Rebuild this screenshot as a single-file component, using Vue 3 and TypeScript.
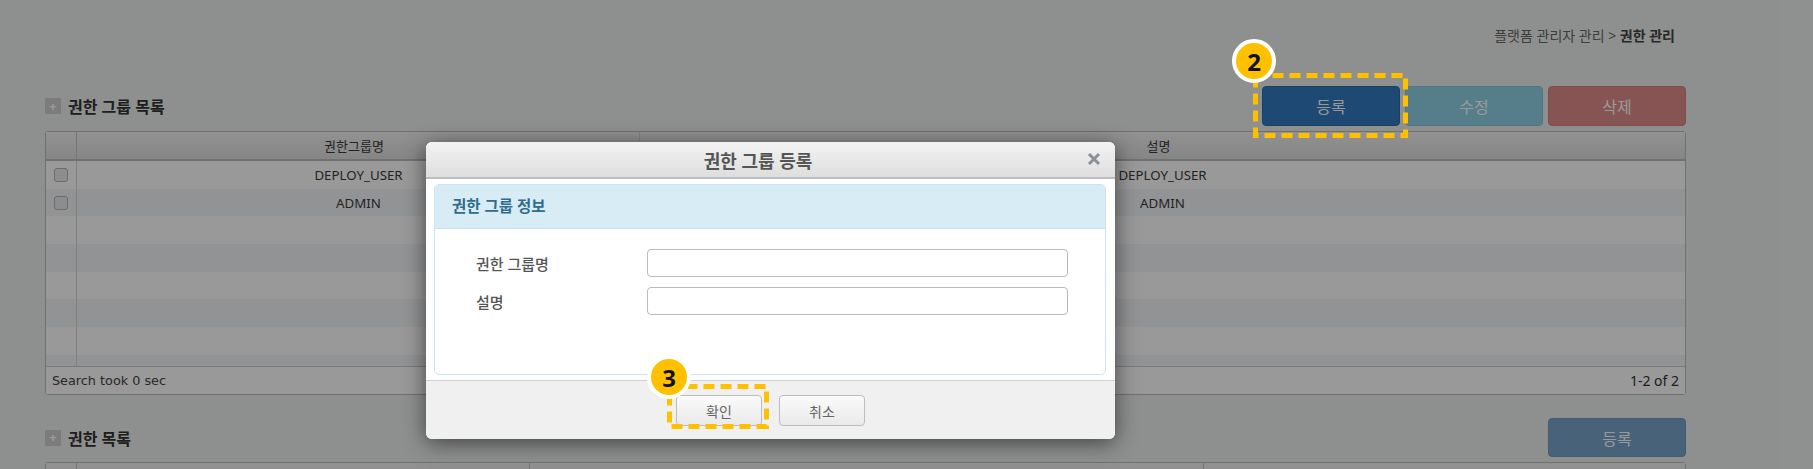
<script setup lang="ts">
const groupRows = [
  { name: 'DEPLOY_USER', desc: 'DEPLOY_USER' },
  { name: 'ADMIN', desc: 'ADMIN' },
  { name: '', desc: '' },
  { name: '', desc: '' },
  { name: '', desc: '' },
  { name: '', desc: '' },
  { name: '', desc: '' },
  { name: '', desc: '' },
]
</script>

<template>
  <div class="screen">
    <main class="page">
      <div class="breadcrumb">플랫폼 관리자 관리 &gt; <b>권한 관리</b></div>

      <div class="section-head first">
        <h2 class="section-title"><span class="plus">+</span>권한 그룹 목록</h2>
        <div class="actions">
          <button class="btn blue-dark">등록</button>
          <button class="btn teal">수정</button>
          <button class="btn red">삭제</button>
        </div>
      </div>

      <div class="grid-box">
        <div class="grid-row grid-head cols-a">
          <div class="cell"></div>
          <div class="cell head-shift">권한그룹명</div>
          <div class="cell head-shift">설명</div>
        </div>
        <div class="grid-body">
          <div v-for="(row, i) in groupRows" :key="i" class="grid-row cols-a body-row" :class="{ even: i % 2 === 1 }">
            <div class="cell check-cell">
              <input v-if="row.name" class="check" type="checkbox" />
            </div>
            <div class="cell">{{ row.name }}</div>
            <div class="cell plain">{{ row.desc }}</div>
          </div>
        </div>
        <div class="grid-foot">
          <span class="took">Search took 0 sec</span>
          <span class="count">1-2 of 2</span>
        </div>
      </div>

      <div class="section-head second">
        <h2 class="section-title"><span class="plus">+</span>권한 목록</h2>
        <div class="actions">
          <button class="btn blue">등록</button>
        </div>
      </div>

      <div class="grid-box cut">
        <div class="grid-row grid-head cols-b">
          <div class="cell"></div>
          <div class="cell"></div>
          <div class="cell"></div>
          <div class="cell"></div>
        </div>
      </div>
    </main>

    <div class="dim"></div>
    <svg class="callout box-2" width="155" height="65" viewBox="0 0 155 65">
      <rect x="2.5" y="2.5" width="150" height="60" fill="none" stroke="#ffc000" stroke-width="5" stroke-dasharray="11 6" />
    </svg>
    <div class="badge badge-2">2</div>

    <section class="modal">
      <header class="modal-head">
        <span class="modal-title">권한 그룹 등록</span>
        <svg class="modal-close" width="14" height="14" viewBox="0 0 14 14">
          <path d="M2 2 L12 12 M12 2 L2 12" fill="none" stroke="#8b9096" stroke-width="3" />
        </svg>
      </header>
      <div class="modal-body">
        <div class="panel">
          <div class="panel-head">권한 그룹 정보</div>
          <div class="panel-body">
            <label class="field">
              <span class="field-label">권한 그룹명</span>
              <input class="field-input" type="text" />
            </label>
            <label class="field">
              <span class="field-label">설명</span>
              <input class="field-input" type="text" />
            </label>
          </div>
        </div>
      </div>
      <footer class="modal-foot">
        <button class="foot-btn">확인</button>
        <button class="foot-btn">취소</button>
      </footer>
    </section>

    <svg class="callout box-3" width="102" height="45" viewBox="0 0 102 45">
      <rect x="2.5" y="2.5" width="97" height="40" fill="none" stroke="#ffc000" stroke-width="5" stroke-dasharray="11 6" />
    </svg>
    <div class="badge badge-3">3</div>
  </div>
</template>

<style>
html, body { margin: 0; overflow: hidden; }
</style>

<style scoped>
.screen {
  position: relative;
  width: 1813px;
  height: 469px;
  overflow: hidden;
  background: #edf1ee;
  font-family: "Noto Sans", "Noto Sans CJK KR", sans-serif;
}
.page { box-sizing: border-box; width: 1813px; padding: 26px 127px 0 45px; }
.breadcrumb {
  height: 20px;
  line-height: 20px;
  padding-right: 11px;
  text-align: right;
  font-size: 14px;
  color: #666;
}
.breadcrumb b { color: #444; }
.section-head { display: flex; align-items: center; justify-content: space-between; }
.section-head.first { margin-top: 40px; height: 40px; }
.section-head.second { margin-top: 23px; height: 39px; }
.section-title {
  display: flex;
  align-items: center;
  gap: 7px;
  margin: 0;
  font-size: 16px;
  font-weight: 700;
  color: #333;
}
.plus {
  display: flex;
  align-items: center;
  justify-content: center;
  width: 16px;
  height: 16px;
  background: #cfcfcf;
  color: #fff;
  font-size: 13px;
  font-weight: 700;
  line-height: 1;
}
.actions { display: flex; gap: 5px; }
.btn {
  box-sizing: border-box;
  width: 138px;
  border-radius: 4px;
  border: 1px solid transparent;
  color: #fff;
  font: inherit;
  font-size: 16px;
  padding: 0;
}
.first .btn { height: 40px; }
.second .btn { height: 39px; }
.blue-dark { background: #317bbe; border-color: #2a6ca8; }
.teal { background: #90d2e6; border-color: #86c6da; }
.red { background: #df8c89; border-color: #d6807d; }
.blue { background: #78a5ca; border-color: #6f9bc0; }

.grid-box {
  box-sizing: border-box;
  margin-top: 5px;
  border: 1px solid #bbb;
  border-radius: 3px;
  background: #fff;
  font-size: 13.3px;
  color: #3a3a3a;
}
.cut { height: 60px; }
.grid-row { display: grid; align-items: stretch; }
.cols-a { grid-template-columns: 31px 563px 1fr; }
.cols-b { grid-template-columns: 31px 453px 674px 1fr; }
.grid-head {
  height: 27px;
  background: linear-gradient(#f3f3f3, #dfdfdf);
  border-bottom: 2px solid #bdbdbd;
}
.grid-head .cell { border-right: 1px solid #c4c4c4; }
.grid-head .cell:last-child { border-right: 0; }
.cols-a.grid-head .cell:nth-child(2) { border-right-color: #d4d4d4; }
.cell {
  display: flex;
  align-items: center;
  justify-content: center;
  min-width: 0;
}
.head-shift { padding-right: 8px; font-size: 13px; }
.grid-body { height: 205px; overflow: hidden; border-bottom: 1px solid #ccc; }
.body-row { height: 27.7px; background: #fff; }
.body-row.even { background: #f4f5f7; }
.check-cell { border-right: 1px solid #d6d6d6; }
.check {
  appearance: none;
  box-sizing: border-box;
  width: 14px;
  height: 14px;
  margin: 0;
  border: 1px solid #b5b5b5;
  border-radius: 3px;
  background: #ececec;
}
.grid-foot {
  display: flex;
  align-items: center;
  justify-content: space-between;
  height: 27px;
  padding: 0 6px;
  background: #fff;
}
.took { font-family: "DejaVu Sans", sans-serif; font-size: 12.8px; color: #444; }
.count { font-size: 14px; color: #333; }

.dim { position: absolute; inset: 0; background: rgba(0, 0, 0, 0.4); }

.modal {
  position: absolute;
  left: 426px;
  top: 142px;
  display: flex;
  flex-direction: column;
  width: 689px;
  height: 297px;
  overflow: hidden;
  border-radius: 6px;
  background: #fff;
  box-shadow: 0 4px 22px rgba(0, 0, 0, 0.55);
}
.modal-head {
  position: relative;
  flex: 0 0 35px;
  display: flex;
  align-items: center;
  justify-content: center;
  padding-right: 25px;
  background: linear-gradient(#f3f3f3, #dedede);
  border-bottom: 2px solid #bdbdbd;
}
.modal-title { font-size: 18px; font-weight: 700; color: #555; }
.modal-close { position: absolute; right: 14px; top: 10px; }
.modal-body { flex: 1; padding: 5px 9px 5px 8px; }
.panel {
  box-sizing: border-box;
  height: 191px;
  border: 1px solid #c9e6f1;
  border-radius: 5px;
  overflow: hidden;
}
.panel-head {
  box-sizing: border-box;
  height: 44px;
  padding-left: 17px;
  line-height: 42px;
  font-size: 15.5px;
  font-weight: 700;
  color: #2f6d8c;
  background: #d8ecf5;
  border-bottom: 1px solid #c2e2ee;
}
.panel-body { display: flex; flex-direction: column; gap: 10px; padding: 20px 0 0 41px; }
.field { display: flex; align-items: center; }
.field-label { width: 171px; font-size: 15px; font-weight: 500; color: #555; }
.field-input {
  box-sizing: border-box;
  width: 421px;
  height: 28px;
  padding: 0 6px;
  border: 1px solid #bbb;
  border-radius: 4px;
  background: #fff;
  outline: none;
}
.modal-foot {
  flex: 0 0 60px;
  box-sizing: border-box;
  display: flex;
  justify-content: center;
  gap: 17px;
  padding: 14px 0 0 0;
  background: #f0f0f0;
  border-top: 1px solid #d2d2d2;
}
.foot-btn {
  box-sizing: border-box;
  width: 86px;
  height: 31px;
  padding: 0;
  border: 1px solid #bdbdbd;
  border-radius: 4px;
  background: linear-gradient(#fbfbfb, #e9e9e9);
  font: inherit;
  font-size: 14px;
  color: #666;
}

.callout { position: absolute; }
.box-2 { left: 1253px; top: 73px; }
.box-3 { left: 667px; top: 384px; }
.badge {
  position: absolute;
  box-sizing: border-box;
  width: 44px;
  height: 44px;
  display: flex;
  align-items: center;
  justify-content: center;
  border: 4px solid #fff;
  border-radius: 50%;
  background: #ffc000;
  color: #111;
  font-size: 24px;
  font-weight: 700;
}
.badge-2 { left: 1232px; top: 39px; }
.badge-3 { left: 647px; top: 355px; }
</style>
